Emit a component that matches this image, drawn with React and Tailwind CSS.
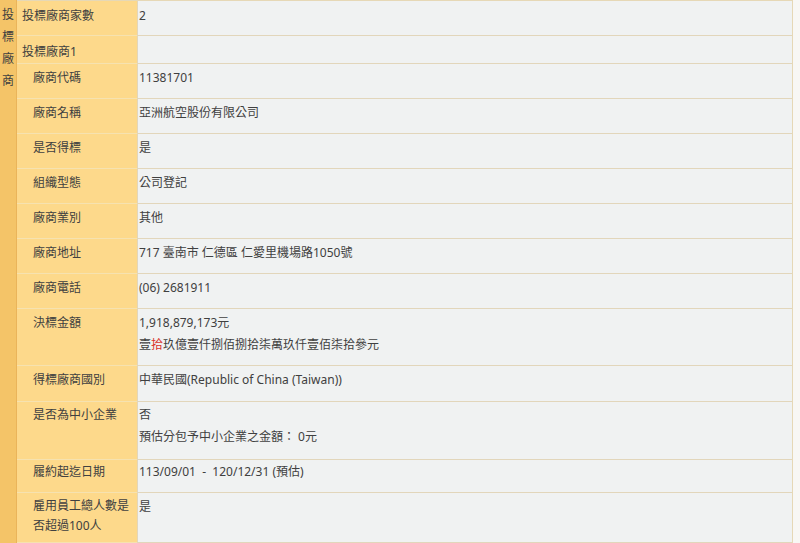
import React from "react";

const rows = [
  { label: "投標廠商家數", value: ["2"], h: "h-[35px]", pt: "pt-[4px]", indent: false },
  { label: "投標廠商1", value: [""], h: "h-[28px]", pt: "pt-[5px]", indent: false },
  { label: "廠商代碼", value: ["11381701"], h: "h-[35px]", pt: "pt-[3px]", indent: true },
  { label: "廠商名稱", value: ["亞洲航空股份有限公司"], h: "h-[35px]", pt: "pt-[3px]", indent: true },
  { label: "是否得標", value: ["是"], h: "h-[35px]", pt: "pt-[3px]", indent: true },
  { label: "組織型態", value: ["公司登記"], h: "h-[35px]", pt: "pt-[3px]", indent: true },
  { label: "廠商業別", value: ["其他"], h: "h-[35px]", pt: "pt-[3px]", indent: true },
  { label: "廠商地址", value: ["717 臺南市 仁德區 仁愛里機場路1050號"], h: "h-[35px]", pt: "pt-[3px]", indent: true },
  { label: "廠商電話", value: ["(06) 2681911"], h: "h-[35px]", pt: "pt-[3px]", indent: true },
  { label: "決標金額", value: ["1,918,879,173元", "AMOUNT"], h: "h-[57px]", pt: "pt-[3px]", indent: true },
  { label: "得標廠商國別", value: ["中華民國(Republic of China (Taiwan))"], h: "h-[36px]", pt: "pt-[3px]", indent: true },
  { label: "是否為中小企業", value: ["否", "預估分包予中小企業之金額： 0元"], h: "h-[58px]", pt: "pt-[2px]", indent: true },
  { label: "履約起迄日期", value: ["113/09/01  -  120/12/31 (預估)"], h: "h-[33px]", pt: "pt-[1px]", indent: true },
  { label: "雇用員工總人數是否超過100人", value: ["是"], h: "h-[50px]", pt: "pt-[3px]", indent: true, wrap: true },
];

export default function App() {
  return (
    <div
      className="flex w-[800px] h-[543px] overflow-hidden bg-[#f7f5ef] text-[12px] text-[#404040]"
      style={{ fontFamily: '"Noto Sans", "Noto Sans CJK TC", sans-serif' }}
    >
      <div className="w-[17px] shrink-0 bg-[#f4c468] border-r border-[#eab45a] flex flex-col items-center pt-[4px] leading-[22px] text-[12px]">
        <span>投</span>
        <span>標</span>
        <span>廠</span>
        <span>商</span>
      </div>
      <div className="w-[776px] flex flex-col border-t border-[#e6d8b6] border-r">
        {rows.map((r, i) => (
          <div key={i} className={`flex shrink-0 ${r.h}`}>
            <div
              className={`w-[120px] shrink-0 bg-[#fdd98b] border-b border-[#f6e2b0] ${r.pt} leading-[22px] ${r.indent ? "pl-[16px] pr-[2px]" : "pl-[5px]"}`}
            >
              {r.wrap ? (
                <>
                  <div className="leading-[20px]">雇用員工總人數是</div>
                  <div className="leading-[20px]">否超過100人</div>
                </>
              ) : (
                r.label
              )}
            </div>
            <div className={`flex-1 bg-[#f0f2f2] border-b border-l border-[#e2d6bb] pl-[1px] ${r.pt} leading-[22px] whitespace-pre`}>
              {r.value.map((v, j) =>
                v === "AMOUNT" ? (
                  <div key={j}>
                    壹<span className="text-[#d9342b]">拾</span>玖億壹仟捌佰捌拾柒萬玖仟壹佰柒拾參元
                  </div>
                ) : (
                  <div key={j}>{v}</div>
                )
              )}
            </div>
          </div>
        ))}
      </div>
      <div className="flex-1 bg-[#f8f7f4]" />
    </div>
  );
}
